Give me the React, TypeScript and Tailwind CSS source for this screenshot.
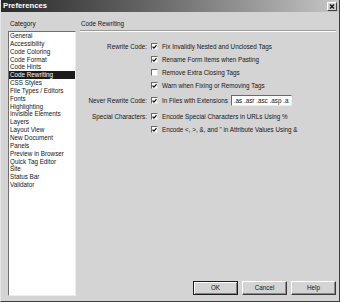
import React from 'react';

const categories = [
  'General',
  'Accessibility',
  'Code Coloring',
  'Code Format',
  'Code Hints',
  'Code Rewriting',
  'CSS Styles',
  'File Types / Editors',
  'Fonts',
  'Highlighting',
  'Invisible Elements',
  'Layers',
  'Layout View',
  'New Document',
  'Panels',
  'Preview in Browser',
  'Quick Tag Editor',
  'Site',
  'Status Bar',
  'Validator',
];

const CheckBox: React.FC<{ checked?: boolean }> = ({ checked }) => (
  <span className="w-[7px] h-[7px] shrink-0 bg-white border-t border-l border-[#6a6a6a] border-r border-b border-r-[#e4e4e4] border-b-[#e4e4e4] flex items-center justify-center">
    {checked && (
      <svg width="6" height="6" viewBox="0 0 6 6">
        <path d="M0.6 2.6 L2.3 4.4 L5.4 0.9" stroke="#111" strokeWidth="1.4" fill="none" />
      </svg>
    )}
  </span>
);

const Row: React.FC<{ label?: string; checked?: boolean; text: string; children?: React.ReactNode; className?: string }> = ({
  label,
  checked,
  text,
  children,
  className = '',
}) => (
  <div className={`flex items-center h-[13px] ${className}`}>
    <span className="w-[67px] shrink-0 text-right whitespace-nowrap">{label}</span>
    <span className="ml-[4px]">
      <CheckBox checked={checked} />
    </span>
    <span className="ml-[4px] whitespace-nowrap">{text}</span>
    {children}
  </div>
);

const Button: React.FC<{ label: string; isDefault?: boolean }> = ({ label, isDefault }) => (
  <button
    className={`w-[45px] h-[14px] bg-[#d4d4d4] flex items-center justify-center text-[6.3px] ${
      isDefault
        ? 'border border-[#1e1e1e] shadow-[inset_1px_1px_0_#ffffff,inset_-1px_-1px_0_#808080]'
        : 'border-t border-l border-white border-r border-b border-r-[#3a3a3a] border-b-[#3a3a3a] shadow-[inset_-1px_-1px_0_#8a8a8a]'
    }`}
  >
    {label}
  </button>
);

export default function App() {
  return (
    <div
      className="w-[340px] h-[302px] bg-[#d4d4d4] flex flex-col border-l border-l-[#e6e6e6] border-r border-r-[#3c3c3c] border-b border-b-[#3c3c3c] text-[#141414] text-[6.3px] overflow-hidden"
      style={{ fontFamily: '"Liberation Sans", Arial, sans-serif' }}
    >
      <div className="h-[12px] shrink-0 flex items-center justify-between bg-gradient-to-r from-[#2a2a2a] via-[#707070] to-[#c6c6c6]">
        <span className="pl-[2px] text-white font-bold text-[7.7px] leading-none">Preferences</span>
        <span className="w-[10px] h-[9px] mr-[2px] bg-[#d0d0d0] border-t border-l border-white border-r border-b border-r-[#404040] border-b-[#404040] flex items-center justify-center">
          <svg width="6" height="5" viewBox="0 0 6 5">
            <path d="M1 0.5 L5 4.5 M5 0.5 L1 4.5" stroke="#111" strokeWidth="1.3" />
          </svg>
        </span>
      </div>

      <div className="flex-1 flex pl-[7px] pr-[3px] pb-[5px]">
        <div className="w-[68px] flex flex-col">
          <div className="pt-[8px] h-[19px] leading-[8px] pl-[2px]">Category</div>
          <div className="flex-1 bg-white border-t border-l border-[#6e6e6e] border-r border-b border-r-[#ececec] border-b-[#ececec] leading-[7.84px]">
            {categories.map((c) => (
              <div
                key={c}
                className={`px-[1px] whitespace-nowrap ${c === 'Code Rewriting' ? 'bg-[#1c1c1c] text-white' : ''}`}
              >
                {c}
              </div>
            ))}
          </div>
        </div>

        <div className="flex-1 ml-[4px] flex flex-col">
          <div className="pt-[8px] h-[16px] leading-[8px] pl-[1px]">Code Rewriting</div>
          <div className="mt-[2px] border-t border-[#9a9a9a] border-b border-b-white" />

          <div className="mt-[8px] flex flex-col">
            <Row label="Rewrite Code:" checked text="Fix Invalidly Nested and Unclosed Tags" />
            <Row checked text="Rename Form Items when Pasting" />
            <Row text="Remove Extra Closing Tags" />
            <Row checked text="Warn when Fixing or Removing Tags" />
            <Row label="Never Rewrite Code:" checked text="In Files with Extensions" className="mt-[2px]">
              <span className="ml-[3px] w-[61px] h-[11px] bg-white border-t border-l border-[#6a6a6a] border-r border-b border-r-[#ececec] border-b-[#ececec] overflow-hidden whitespace-nowrap pl-[2px] leading-[9px]">
                .as .asr .asc .asp .a
              </span>
            </Row>
            <Row label="Special Characters:" checked text="Encode Special Characters in URLs Using %" className="mt-[3px]" />
            <Row checked text={'Encode <, >, &, and " in Attribute Values Using &'} />
          </div>

          <div className="flex-1" />
          <div className="flex justify-end gap-[4px] mb-[1px]">
            <Button label="OK" isDefault />
            <Button label="Cancel" />
            <Button label="Help" />
          </div>
        </div>
      </div>
    </div>
  );
}
